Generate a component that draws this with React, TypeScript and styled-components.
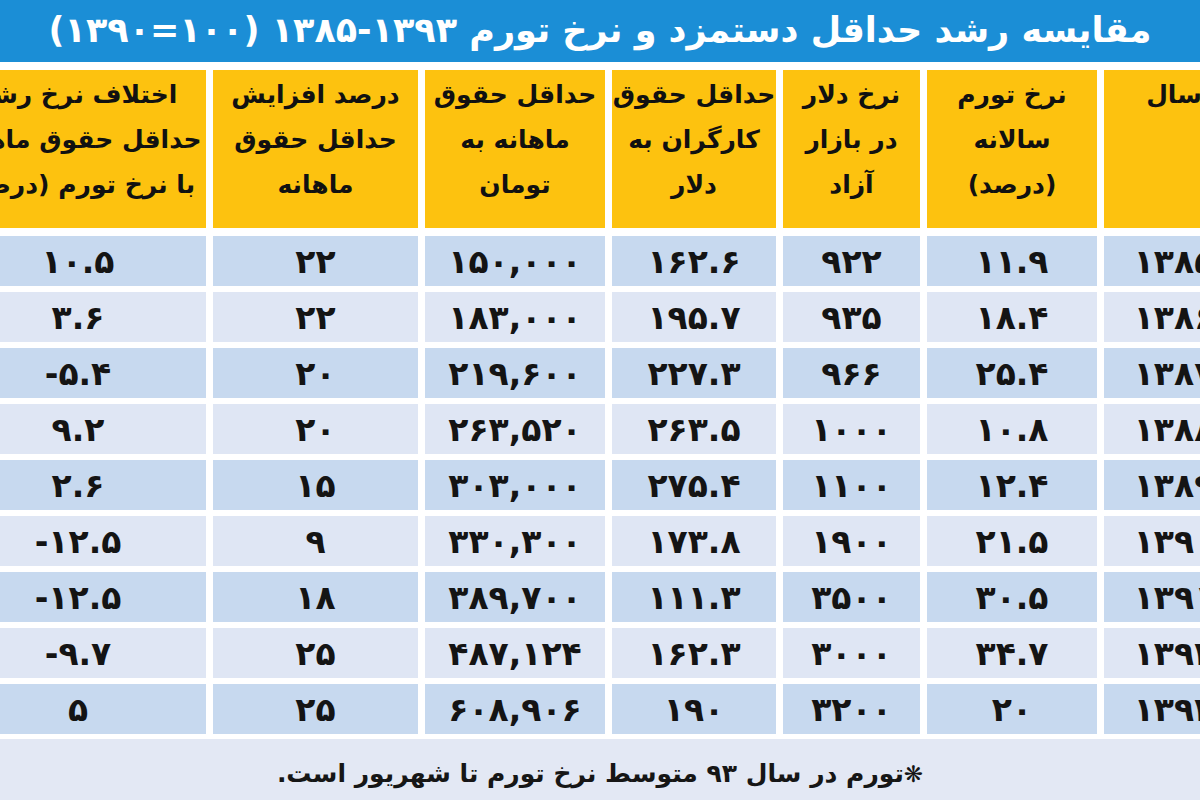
import React from "react";
import styled, { createGlobalStyle } from "styled-components";

const GlobalStyle = createGlobalStyle`
  html, body {
    margin: 0;
    padding: 0;
    background: #ffffff;
    overflow: hidden;
  }
  body {
    font-family: "DejaVu Sans", "Noto Sans", sans-serif;
  }
`;

const Page = styled.div`
  width: 1200px;
  height: 800px;
  display: flex;
  flex-direction: column;
  overflow: hidden;
  background: #ffffff;
`;

const TitleBar = styled.div`
  height: 62px;
  flex: none;
  background: #1b8ed6;
  color: #ffffff;
  display: flex;
  align-items: center;
  justify-content: center;
  direction: rtl;
  font-size: 35px;
  font-weight: 700;
  white-space: nowrap;
  padding-bottom: 2px;
  box-sizing: border-box;
`;

const Table = styled.div`
  margin-top: 8px;
  margin-left: -50px;
  width: 1294px;
  flex: none;
  display: grid;
  grid-template-columns: 140px 170px 137px 164px 180px 205px 256px;
  column-gap: 7px;
  row-gap: 6px;
  direction: rtl;
`;

const HeadCell = styled.div`
  background: #fdc20f;
  height: 158px;
  margin-bottom: 2px;
  padding-top: 2px;
  box-sizing: border-box;
  text-align: center;
  font-size: 25px;
  font-weight: 700;
  line-height: 45px;
  color: #111111;
  white-space: nowrap;
  overflow: hidden;
`;

const Cell = styled.div<{ $dark: boolean }>`
  height: 50px;
  background: ${(p) => (p.$dark ? "#c7d9ef" : "#dfe6f4")};
  display: flex;
  align-items: center;
  justify-content: center;
  direction: ltr;
  font-size: 33px;
  font-weight: 700;
  color: #141414;
  white-space: nowrap;
`;

const Footer = styled.div`
  flex: 1;
  margin-top: 5px;
  background: #e3e8f4;
  display: flex;
  align-items: center;
  justify-content: center;
  padding-top: 8px;
  box-sizing: border-box;
  direction: rtl;
  font-size: 25px;
  font-weight: 700;
  color: #161616;
`;

const Star = styled.span`
  font-size: 23px;
`;

const headers: string[][] = [
  ["سال"],
  ["نرخ تورم", "سالانه", "(درصد)"],
  ["نرخ دلار", "در بازار", "آزاد"],
  ["حداقل حقوق", "کارگران به", "دلار"],
  ["حداقل حقوق", "ماهانه به", "تومان"],
  ["درصد افزایش", "حداقل حقوق", "ماهانه"],
  ["اختلاف نرخ رشد", "حداقل حقوق ماهانه", "با نرخ تورم (درصد)"],
];

const rows: string[][] = [
  ["۱۳۸۵", "۱۱.۹", "۹۲۲", "۱۶۲.۶", "۱۵۰,۰۰۰", "۲۲", "۱۰.۵"],
  ["۱۳۸۶", "۱۸.۴", "۹۳۵", "۱۹۵.۷", "۱۸۳,۰۰۰", "۲۲", "۳.۶"],
  ["۱۳۸۷", "۲۵.۴", "۹۶۶", "۲۲۷.۳", "۲۱۹,۶۰۰", "۲۰", "-۵.۴"],
  ["۱۳۸۸", "۱۰.۸", "۱۰۰۰", "۲۶۳.۵", "۲۶۳,۵۲۰", "۲۰", "۹.۲"],
  ["۱۳۸۹", "۱۲.۴", "۱۱۰۰", "۲۷۵.۴", "۳۰۳,۰۰۰", "۱۵", "۲.۶"],
  ["۱۳۹۰", "۲۱.۵", "۱۹۰۰", "۱۷۳.۸", "۳۳۰,۳۰۰", "۹", "-۱۲.۵"],
  ["۱۳۹۱", "۳۰.۵", "۳۵۰۰", "۱۱۱.۳", "۳۸۹,۷۰۰", "۱۸", "-۱۲.۵"],
  ["۱۳۹۲", "۳۴.۷", "۳۰۰۰", "۱۶۲.۳", "۴۸۷,۱۲۴", "۲۵", "-۹.۷"],
  ["۱۳۹۳", "۲۰", "۳۲۰۰", "۱۹۰", "۶۰۸,۹۰۶", "۲۵", "۵"],
];

export default function App() {
  return (
    <Page>
      <GlobalStyle />
      <TitleBar>مقایسه رشد حداقل دستمزد و نرخ تورم ۱۳۹۳-۱۳۸۵ (۱۰۰=۱۳۹۰)</TitleBar>
      <Table>
        {headers.map((lines, i) => (
          <HeadCell key={"h" + i}>
            {lines.map((l, j) => (
              <div key={j}>{l}</div>
            ))}
          </HeadCell>
        ))}
        {rows.map((row, r) =>
          row.map((v, c) => (
            <Cell key={r + "-" + c} $dark={r % 2 === 0}>
              {v}
            </Cell>
          ))
        )}
      </Table>
      <Footer>
        <Star>❋</Star>
        تورم در سال ۹۳ متوسط نرخ تورم تا شهریور است.
      </Footer>
    </Page>
  );
}
